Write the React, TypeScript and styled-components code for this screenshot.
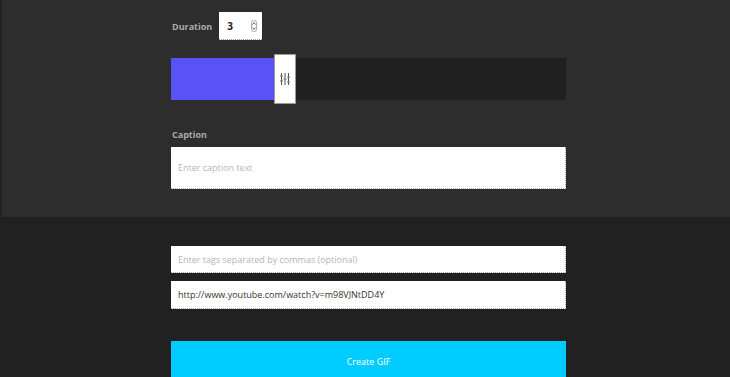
import React from "react";
import styled, { createGlobalStyle } from "styled-components";

const GlobalStyle = createGlobalStyle`
  html, body {
    margin: 0;
    padding: 0;
    background: #212121;
    font-family: "Open Sans", "Liberation Sans", sans-serif;
  }
`;

const Page = styled.div`
  width: 730px;
  height: 377px;
  overflow: hidden;
  background: #212121;
`;

const TopPanel = styled.section`
  margin-left: 2px;
  height: 217px;
  background: #2d2d2d;
  box-sizing: border-box;
  padding: 12px 0 0 169px;
`;

const Column = styled.div`
  width: 395px;
  display: flex;
  flex-direction: column;
`;

const DurationRow = styled.div`
  display: flex;
  align-items: center;
  gap: 7px;
  padding-left: 1px;
`;

const Label = styled.label`
  color: #a9a9a9;
  font-size: 9px;
  font-weight: 700;
`;

const NumberBox = styled.div`
  width: 43px;
  height: 28px;
  background: #fff;
  border-bottom: 1px dotted #999;
  box-sizing: border-box;
  display: flex;
  align-items: center;
  justify-content: space-between;
  padding: 0 5px 0 8px;
  font-size: 10px;
  font-weight: 700;
  color: #222;
`;

const Spinner = styled.svg`
  width: 6px;
  height: 12px;
`;

const Slider = styled.div`
  margin-top: 18px;
  height: 42px;
  display: flex;
  align-items: center;
  background: #202020;
`;

const Fill = styled.div`
  height: 100%;
  background: #5953f5;
`;

const Handle = styled.div`
  width: 22px;
  height: 50px;
  background: #fff;
  border: 1px solid #999;
  box-sizing: border-box;
  display: flex;
  align-items: center;
  justify-content: center;
`;

const CaptionLabel = styled(Label)`
  margin-top: 28px;
  padding-left: 1px;
`;

const Field = styled.input<{ $h: number }>`
  display: block;
  width: 100%;
  height: ${({ $h }) => $h}px;
  box-sizing: border-box;
  border: none;
  border-bottom: 1px dotted #aaa;
  border-right: 1px dotted #aaa;
  outline: none;
  background: #fff;
  padding: 0 7px;
  font-family: "Open Sans", "Liberation Sans", sans-serif;
  font-size: 9px;
  color: #333;

  &::placeholder {
    color: #b5b5b5;
  }
`;

const CaptionField = styled(Field)`
  margin-top: 6px;
`;

const Bottom = styled.section`
  padding: 29px 0 0 171px;
`;

const BottomColumn = styled(Column)`
  gap: 8px;
`;

const CreateButton = styled.button`
  margin-top: 24px;
  width: 100%;
  height: 44px;
  border: none;
  background: #00ccff;
  color: #fff;
  font-family: "Open Sans", "Liberation Sans", sans-serif;
  font-size: 9px;
  padding: 0 0 4px;
  display: flex;
  align-items: center;
  justify-content: center;
`;

const Grip = () => (
  <svg width="10" height="12" viewBox="0 0 10 12">
    {[1.5, 5, 8.5].map((x) => (
      <line key={x} x1={x} y1="0" x2={x} y2="12" stroke="#555" strokeWidth="1" />
    ))}
    {[
      [1.5, 3],
      [5, 6],
      [8.5, 4],
      [1.5, 8],
      [8.5, 9],
    ].map(([x, y], i) => (
      <line key={i} x1={x - 1.5} y1={y} x2={x + 1.5} y2={y} stroke="#777" strokeWidth="1" />
    ))}
  </svg>
);

const App = () => {
  const value = 26;
  return (
    <Page>
      <GlobalStyle />
      <TopPanel>
        <Column>
          <DurationRow>
            <Label>Duration</Label>
            <NumberBox>
              <span>3</span>
              <Spinner viewBox="0 0 6 12">
                <rect x="0.5" y="0.5" width="5" height="11" rx="2" fill="none" stroke="#aaa" />
                <path d="M1.5 4.5 L3 2.5 L4.5 4.5" fill="none" stroke="#666" />
                <path d="M1.5 7.5 L3 9.5 L4.5 7.5" fill="none" stroke="#666" />
              </Spinner>
            </NumberBox>
          </DurationRow>
          <Slider>
            <Fill style={{ width: `${value}%` }} />
            <Handle>
              <Grip />
            </Handle>
          </Slider>
          <CaptionLabel>Caption</CaptionLabel>
          <CaptionField $h={42} placeholder="Enter caption text" />
        </Column>
      </TopPanel>
      <Bottom>
        <BottomColumn>
          <Field $h={27} placeholder="Enter tags separated by commas (optional)" />
          <Field $h={28} defaultValue="http://www.youtube.com/watch?v=m98VJNtDD4Y" />
          <CreateButton>Create GIF</CreateButton>
        </BottomColumn>
      </Bottom>
    </Page>
  );
};

export default App;
